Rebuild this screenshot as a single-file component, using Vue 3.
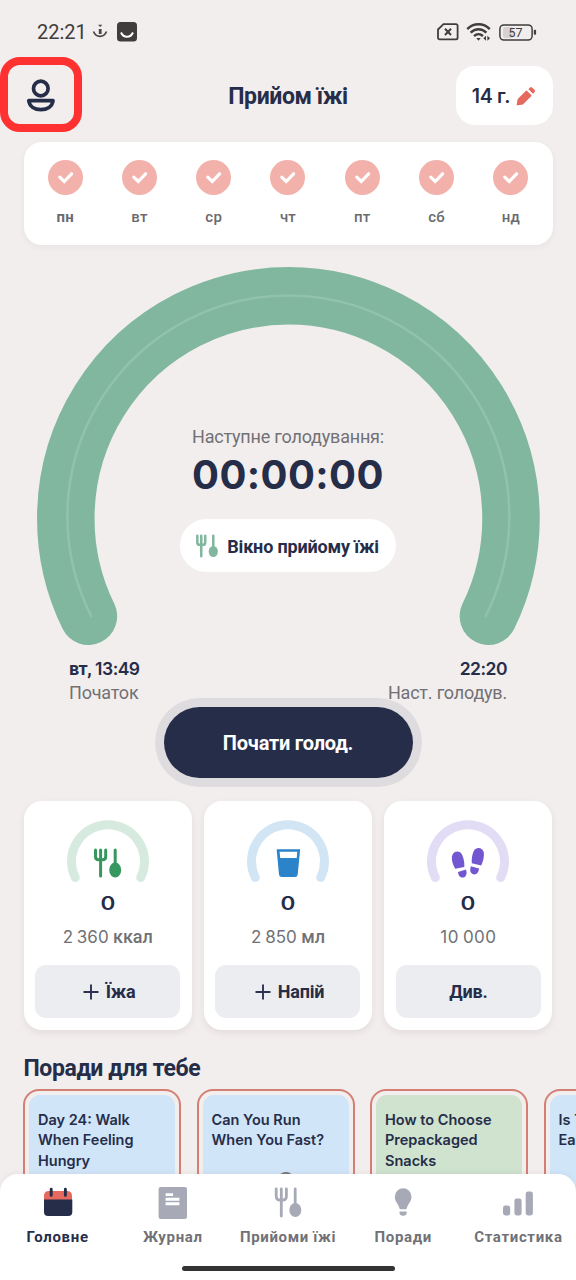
<script setup>
const days = ['пн', 'вт', 'ср', 'чт', 'пт', 'сб', 'нд']

const stats = [
  { id: 'food', value: '0', goal: '2 360', unit: 'ккал', action: 'Їжа', plus: true },
  { id: 'drink', value: '0', goal: '2 850', unit: 'мл', action: 'Напій', plus: true },
  { id: 'steps', value: '0', goal: '10 000', unit: '', action: 'Див.', plus: false },
]

const tips = [
  { lines: ['Day 24: Walk', 'When Feeling', 'Hungry'], tone: 'blue' },
  { lines: ['Can You Run', 'When You Fast?'], tone: 'blue', art: true },
  { lines: ['How to Choose', 'Prepackaged', 'Snacks'], tone: 'green' },
  { lines: ['Is T', 'Ea'], tone: 'blue' },
]

const tabs = [
  { id: 'home', label: 'Головне' },
  { id: 'journal', label: 'Журнал' },
  { id: 'meals', label: 'Прийоми їжі' },
  { id: 'advice', label: 'Поради' },
  { id: 'charts', label: 'Статистика' },
]
</script>

<template>
  <div class="screen">
    <div class="status">
      <span class="clock">22:21</span>
      <svg class="st-mic" width="16" height="16" viewBox="0 0 16 16" fill="none">
        <path d="M1.500 7.500C3 11.500 6 12.300 8 12.300S13 11.500 14.500 7.500" stroke="#4a4747" stroke-width="1.700" />
        <path d="M6 0.800h4.400L8.200 3z" fill="#4a4747" />
        <rect x="6.800" y="5" width="2.800" height="5" fill="#4a4747" />
      </svg>
      <svg class="st-app" width="20" height="20" viewBox="0 0 20 20" fill="none">
        <rect width="20" height="19.500" rx="3.500" fill="#403d3c" />
        <path d="M4 10.500c2.500 5.700 9.500 5.700 12 0" stroke="#fff" stroke-width="1.900" />
      </svg>
      <span class="spacer"></span>
      <svg class="st-sim" width="22" height="18" viewBox="0 0 22 18" fill="none" stroke="#403d3c">
        <path d="M6.500 1.200H19a1.600 1.600 0 0 1 1.600 1.600v12a1.600 1.600 0 0 1-1.600 1.600H2.600A1.600 1.600 0 0 1 1 14.800V6.500z" stroke-width="1.800" />
        <path d="M8 5.800l6 6.200M14 5.800l-6 6.200" stroke-width="2" />
      </svg>
      <svg class="st-wifi" width="25" height="20" viewBox="0 0 26 20" fill="none" stroke="#403d3c" stroke-width="2.500">
        <path d="M1.300 7c6.500-6.700 16.900-6.700 23.400 0" />
        <path d="M4.800 10.700c4.700-4.800 11.700-4.800 16.400 0" />
        <path d="M8.400 14.200c2.700-2.700 6.500-2.700 9.200 0" />
        <path d="M10.700 16.200h4.600L13 19z" fill="#403d3c" stroke="none" />
        <path d="M20.800 14v5.200L18 16.600zM22.200 14v5.200l2.800-2.600z" fill="#403d3c" stroke="none" />
      </svg>
      <svg class="st-bat" width="38" height="17" viewBox="0 0 38 17" fill="none">
        <rect x="4" y="3" width="10" height="11" rx="2" fill="#d5d2d1" />
        <rect x="0.900" y="0.900" width="32.200" height="15.200" rx="4" stroke="#403d3c" stroke-width="1.500" />
        <rect x="34.800" y="5.800" width="2.300" height="5" rx="1" fill="#403d3c" />
        <text x="16.500" y="12.800" text-anchor="middle" class="bat-text">57</text>
      </svg>
    </div>

    <header class="header">
      <svg class="profile" width="30" height="34" viewBox="0 0 30 34" fill="none" stroke="#262d49" stroke-width="3.700">
        <circle cx="14.800" cy="9.500" r="7.300" />
        <path d="M2.800 21.700H27c-.8 5.900-6 8.900-12.100 8.900S3.600 27.600 2.800 21.700z" stroke-linejoin="round" />
      </svg>
      <h1 class="title">Прийом їжі</h1>
      <button class="plan">
        <span class="plan-text">14 г.</span>
        <svg width="20" height="20" viewBox="0 0 20 20">
          <path d="M1.300 18.700l.9-5.200L10.500 5.100l4.500 4.500-8.300 8.300-4.700.8z" fill="#e5695c" stroke="#e5695c" stroke-width="1.200" stroke-linejoin="round" />
          <path d="M12.400 3.200l1.700-1.700q1-.9 2 0l2.600 2.600q.8 1 0 2L17 7.800z" fill="#e5695c" />
        </svg>
      </button>
    </header>

    <section class="week">
      <div v-for="(day, i) in days" :key="day" class="day" :class="{ current: i === 0 }">
        <svg width="35" height="35" viewBox="0 0 35 35" fill="none">
          <circle cx="17.500" cy="17.500" r="17.500" fill="#f3b1ab" />
          <path d="M11.800 17.200l4.400 4.300 7.400-7.700" stroke="#fff" stroke-width="3.200" stroke-linecap="round" />
        </svg>
        <span>{{ day }}</span>
      </div>
    </section>

    <section class="dial">
      <svg class="ring" width="504" height="380" viewBox="0 0 504 380" fill="none" stroke-linecap="round">
        <path d="M52.400 349.200A222.600 222.600 0 1 1 452.400 349.200" stroke="#80b79e" stroke-width="57.500" />
        <path d="M55.200 349.200A221 221 0 1 1 449.600 349.200" stroke="#90c2ac" stroke-width="2.600" />
      </svg>
      <div class="dial-body">
        <span class="next">Наступне голодування:</span>
        <span class="timer">00:00:00</span>
        <span class="window">
          <svg class="cutlery" width="22" height="24" viewBox="0 0 28 30" fill="none" stroke="#80b79e" stroke-width="3.200" stroke-linecap="round">
            <path d="M1.700 2v8.500q0 3 3 3h4q3 0 3-3V2M6.700 2v26" />
            <path d="M22 2v16" />
            <ellipse cx="22" cy="22" rx="5.800" ry="7" fill="#80b79e" stroke="none" />
          </svg>
          <span>Вікно прийому їжі</span>
        </span>
      </div>
    </section>

    <section class="times">
      <div class="time">
        <b><i class="t-day">вт,</i> 13:49</b>
        <span class="start">Початок</span>
      </div>
      <div class="time end">
        <b>22:20</b>
        <span class="until">Наст. голодув.</span>
      </div>
    </section>

    <div class="cta-halo">
      <button class="cta"><span>Почати голод.</span></button>
    </div>

    <section class="stats">
      <article v-for="s in stats" :key="s.id" class="stat" :class="s.id">
        <svg class="gauge" width="84" height="66" viewBox="0 0 84 66" fill="none">
          <path d="M9.300 57.500A36.500 36.500 0 1 1 74.700 57.500" class="track" stroke-width="9" stroke-linecap="round" />
          <g v-if="s.id === 'food'" stroke="#36975f" stroke-width="3" stroke-linecap="round">
            <path d="M29.500 30v6.500q0 3.300 3 3.300h4.200q3 0 3-3.300V30M34.600 30v26M49.200 30v16" />
            <ellipse cx="49.200" cy="50" rx="6" ry="7.500" fill="#36975f" stroke="none" />
          </g>
          <g v-else-if="s.id === 'drink'">
            <path d="M31.200 29.200h22.400q.6 0 .5.700l-2.400 24.500q-.3 2.500-2.800 2.500H35.800q-2.500 0-2.800-2.500L30.700 29.900q-.1-.7.500-.7z" fill="#2b84ca" />
            <path d="M33.600 31.800h17.700l-.6 6.100H34.200z" fill="#fff" />
          </g>
          <g v-else fill="#7357d1">
            <path d="M29.200 48.700C26.800 44.500 25.300 40 26 36.200c1-5.300 8-6.500 10.300-1 1.700 4.200 2.300 8.200 2 11.700z" />
            <path d="M32 52l8-2.400q1.600 5.200-1.200 7.300c-2.600 1.700-6.400.4-6.800-4.900z" />
            <path d="M45.800 43.200c-.3-4.600.3-8.900 2-12.300 2.700-4.900 9.300-3.200 10 1.700.5 4.500-.6 8.700-2.600 13z" />
            <path d="M44.800 46.300l8.200 2.200q-.4 5.600-4.700 6-5.600-.2-3.500-8.200z" />
          </g>
        </svg>
        <strong class="value">{{ s.value }}</strong>
        <span class="goal">{{ s.goal }}<span v-if="s.unit" class="unit">{{ s.unit }}</span></span>
        <button class="action">
          <svg v-if="s.plus" width="16" height="16" viewBox="0 0 16 16" stroke="#2c3250" stroke-width="1.900">
            <path d="M8 .5v15M.5 8h15" />
          </svg>
          <span>{{ s.action }}</span>
        </button>
      </article>
    </section>

    <h2 class="tips-title">Поради для тебе</h2>
    <section class="tips">
      <article v-for="tip in tips" :key="tip.lines[0]" class="tip">
        <div class="tip-face" :class="tip.tone">
          <span v-for="line in tip.lines" :key="line">{{ line }}</span>
          <svg v-if="tip.art" class="art" width="14" height="8" viewBox="0 0 14 8">
            <ellipse cx="7" cy="5" rx="6" ry="4" fill="#77777c" />
          </svg>
        </div>
      </article>
    </section>

    <nav class="nav">
      <div class="tabs">
        <div v-for="tab in tabs" :key="tab.id" class="tab" :class="{ active: tab.id === 'home' }">
          <svg width="34" height="34" viewBox="0 0 34 34" fill="none">
            <g v-if="tab.id === 'home'">
              <path d="M3 14V10q0-5 5-5h18q5 0 5 5v4z" fill="#e5695c" />
              <path d="M3 13.500h28.300V26q0 4-4 4H7q-4 0-4-4z" fill="#262d49" />
              <path d="M10.200 3.200v6.200M24.400 3.200v6.200" stroke="#262d49" stroke-width="2.900" stroke-linecap="round" />
            </g>
            <g v-else-if="tab.id === 'journal'">
              <rect x="2.600" y="1" width="28.400" height="32" rx="2.200" fill="#a7aab6" />
              <path d="M9.600 8.600h7.500M9.600 13.200h13.800M9.600 17.800h13.800" stroke="#fff" stroke-width="2.900" />
            </g>
            <g v-else-if="tab.id === 'meals'" stroke="#a7aab6" stroke-width="2.800" stroke-linecap="round">
              <path d="M5.200 3v7q0 4 3 4h4.200q3 0 3-4V3M10.300 3v27M24.200 3v16" />
              <ellipse cx="24.300" cy="24" rx="6" ry="7" fill="#a7aab6" stroke="none" />
            </g>
            <g v-else-if="tab.id === 'advice'" fill="#a7aab6">
              <path d="M13.500 22.500c-1-4.500-4.700-7-4.700-11.800A8.300 8.300 0 0 1 25.500 10.700c0 4.800-3.800 7.300-4.800 11.800q-.2.800-1 .8h-5.200q-.8 0-1-.8z" />
              <path d="M13.600 25.500h7q.9 4-3.500 4.300-4.400-.3-3.500-4.300z" />
            </g>
            <g v-else fill="#a7aab6">
              <rect x="2" y="19.500" width="7.200" height="10" rx="2.400" />
              <rect x="13.400" y="12.500" width="7.200" height="17" rx="2.400" />
              <rect x="24.700" y="5.500" width="7.200" height="24" rx="2.400" />
            </g>
          </svg>
          <span>{{ tab.label }}</span>
        </div>
      </div>
      <div class="home-bar"></div>
    </nav>

    <div class="highlight"></div>
  </div>
</template>

<style>
html,
body {
  background: #f2eeed;
}
</style>

<style scoped>
.screen {
  position: relative;
  display: flex;
  flex-direction: column;
  width: 576px;
  height: 1280px;
  overflow: hidden;
  background: #f2eeed;
  color: #262d49;
  font-family: Roboto, "Noto Sans", sans-serif;
}
button {
  border: 0;
  padding: 0;
  font-family: inherit;
  color: inherit;
}
svg {
  display: block;
  flex: none;
}
span, b, strong {
  white-space: nowrap;
}
.status {
  display: flex;
  flex: none;
  align-items: center;
  height: 64px;
  padding: 0 39px 0 37px;
  color: #403d3c;
}
.clock {
  width: 48px;
  font-size: 20px;
}
.st-mic { margin-left: 7px; }
.st-app { margin-left: 9px; }
.spacer { flex: 1; }
.st-wifi { margin: 0 8px 0 7px; }
.bat-text {
  font: 400 12.5px Roboto, sans-serif;
  fill: #403d3c;
}
.header {
  display: grid;
  flex: none;
  grid-template-columns: 97px 1fr 97px;
  align-items: center;
  height: 63px;
  padding: 0 23.5px;
}
.profile { margin-left: 2px; }
.title {
  margin: 0;
  padding-top: 2px;
  text-align: center;
  font-size: 23px;
  line-height: 30px;
  font-weight: 700;
  letter-spacing: -0.4px;
}
.plan {
  display: flex;
  align-items: center;
  justify-content: center;
  gap: 6px;
  height: 59px;
  border-radius: 19px;
  background: #fff;
}
.plan-text {
  font: 600 19.5px Inter, sans-serif;
  letter-spacing: -0.3px;
}
.week {
  display: flex;
  flex: none;
  box-sizing: border-box;
  height: 103px;
  margin: 15px 23.5px 0;
  padding: 18px 4.5px 0;
  border-radius: 18px;
  background: #fff;
  box-shadow: 0 2px 7px rgba(60, 40, 40, 0.05);
}
.day {
  flex: 1;
  display: flex;
  flex-direction: column;
  align-items: center;
  gap: 13px;
  font-size: 15px;
  line-height: 18px;
  font-weight: 500;
  letter-spacing: 0.2px;
  color: #6a6a70;
}
.day.current { font-weight: 700; }
.dial {
  display: grid;
  flex: none;
  height: 378px;
  margin-top: 22px;
  justify-items: center;
}
.ring, .dial-body {
  grid-area: 1 / 1;
}
.ring { overflow: visible; }
.dial-body {
  display: flex;
  flex-direction: column;
  align-items: center;
  padding-top: 158px;
}
.next {
  font-size: 18px;
  line-height: 24px;
  letter-spacing: -0.2px;
  color: #717176;
}
.timer {
  margin-top: 3px;
  font: 700 40px/46px Inter, sans-serif;
  font-feature-settings: "calt" 0;
  letter-spacing: 0.4px;
}
.window {
  display: flex;
  align-items: center;
  justify-content: center;
  gap: 9px;
  box-sizing: border-box;
  width: 216px;
  height: 53px;
  margin-top: 21px;
  padding: 1px 1px 0 0;
  border-radius: 27px;
  background: #fff;
  font-size: 18px;
  font-weight: 700;
  letter-spacing: -0.17px;
}
.times {
  display: flex;
  flex: none;
  justify-content: space-between;
  height: 53px;
  padding: 13px 69px 0;
  box-sizing: border-box;
  position: relative;
  z-index: 1;
}
.time {
  display: flex;
  flex-direction: column;
}
.time.end { align-items: flex-end; }
.time b {
  font: 600 17.5px/22px Inter, sans-serif;
  font-feature-settings: "calt" 0;
  letter-spacing: -0.5px;
}
.t-day {
  font: 700 18px Roboto, sans-serif;
}
.time span {
  font-size: 18px;
  line-height: 26px;
  letter-spacing: -0.2px;
  color: #717176;
}
.cta-halo {
  flex: none;
  align-self: center;
  box-sizing: border-box;
  width: 267px;
  height: 89px;
  padding: 9px;
  border-radius: 45px;
  background: #dfdce0;
}
.cta {
  display: block;
  width: 249px;
  height: 71px;
  border-radius: 36px;
  background: #262d49;
  color: #fff;
  font-size: 20px;
  font-weight: 700;
  letter-spacing: -0.22px;
}
.stats {
  display: grid;
  flex: none;
  grid-template-columns: repeat(3, 1fr);
  gap: 12px;
  margin: 14px 23.5px 0;
}
.stat {
  display: flex;
  flex-direction: column;
  align-items: center;
  box-sizing: border-box;
  height: 229px;
  padding-top: 18.5px;
  border-radius: 18px;
  background: #fff;
  box-shadow: 0 3px 7px rgba(60, 40, 40, 0.08);
}
.food .track { stroke: #d6eadf; }
.drink .track { stroke: #d2e5f5; }
.steps .track { stroke: #e2dcf5; }
.value {
  margin-top: 6px;
  font: 600 18px/24px Inter, sans-serif;
  transform: scaleX(1.25);
}
.goal {
  margin-top: 9.5px;
  font: 400 17px/24px Inter, sans-serif;
  word-spacing: -1px;
  color: #717176;
}
.steps .goal { letter-spacing: 0.4px; }
.unit {
  margin-left: 4.5px;
  font: 500 18px Roboto, sans-serif;
  letter-spacing: -0.1px;
}
.action {
  display: flex;
  align-items: center;
  justify-content: center;
  gap: 7px;
  box-sizing: border-box;
  width: 145px;
  height: 53px;
  margin-top: 15.5px;
  padding-top: 1px;
  border-radius: 11px;
  background: #ecedf1;
  font-size: 18px;
  font-weight: 700;
  letter-spacing: -0.2px;
}
.action svg { margin-left: 3px; }
.tips-title {
  margin: 24px 23.5px 0;
  font-size: 23px;
  line-height: 30px;
  font-weight: 700;
  letter-spacing: -0.4px;
}
.tips {
  display: flex;
  gap: 15.5px;
  margin: 5px 0 0 23px;
}
.tip {
  flex: none;
  box-sizing: border-box;
  width: 158px;
  height: 158px;
  padding: 4px;
  border: 2px solid #d47f73;
  border-radius: 16px;
}
.tip-face {
  display: flex;
  flex-direction: column;
  box-sizing: border-box;
  height: 100%;
  padding: 15px 9px 0;
  border-radius: 11px;
  font: 600 14.5px/20.4px Inter, sans-serif;
}
.blue { background: #d1e5f9; }
.green { background: #cfe3cf; }
.art { margin: 20px 0 0 67px; }
.nav {
  position: absolute;
  left: 0;
  right: 0;
  bottom: 0;
  display: flex;
  flex-direction: column;
  align-items: center;
  height: 106px;
  padding-top: 12px;
  box-sizing: border-box;
  border-radius: 18px 18px 0 0;
  background: #fff;
  box-shadow: 0 -1px 5px rgba(60, 40, 40, 0.06);
}
.tabs {
  display: grid;
  grid-template-columns: repeat(5, minmax(0, 1fr));
  width: 100%;
  height: 80px;
}
.tab {
  display: flex;
  flex-direction: column;
  align-items: center;
  gap: 7px;
  font-size: 15px;
  line-height: 20px;
  font-weight: 700;
  letter-spacing: 0.65px;
  color: #717176;
}
.tab.active { color: #262d49; }
.home-bar {
  width: 213px;
  height: 5px;
  border-radius: 3px;
  background: #333;
}
.highlight {
  position: absolute;
  left: 0;
  top: 57px;
  box-sizing: border-box;
  width: 82px;
  height: 75px;
  border: 8px solid #ff3131;
  border-radius: 20px;
}
</style>
